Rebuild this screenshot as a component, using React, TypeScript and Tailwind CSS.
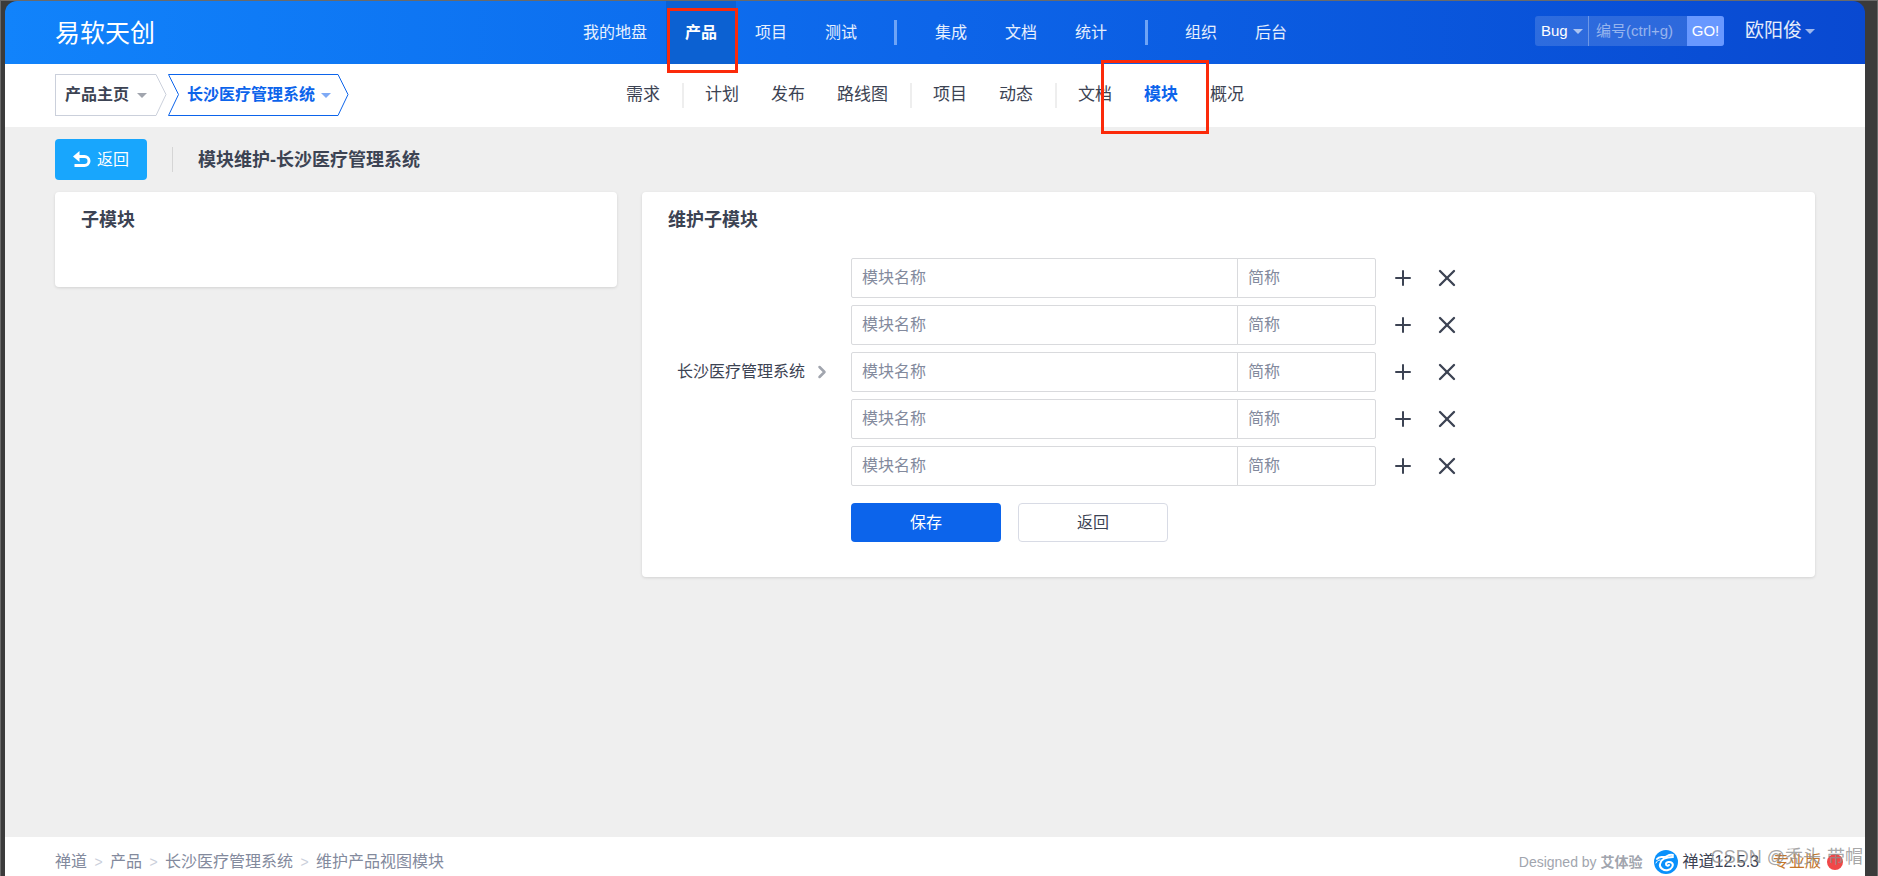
import React from 'react';
import { ChevronRight, Plus, X } from 'lucide-react';

const MAIN_NAV = ['我的地盘', '产品', '项目', '测试', '|', '集成', '文档', '统计', '|', '组织', '后台'];

const SUB_NAV = ['需求', '|', '计划', '发布', '路线图', '|', '项目', '动态', '|', '文档', '模块', '概况'];

const BREADCRUMBS = ['禅道', '产品', '长沙医疗管理系统', '维护产品视图模块'];

const ROWS = [1, 2, 3, 4, 5];

const Caret = ({ className }: { className: string }) => (
  <svg viewBox="0 0 10 5" className={`h-[5px] w-[10px] shrink-0 ${className}`} aria-hidden="true">
    <path d="M0 0h10L5 5z" fill="currentColor" />
  </svg>
);

const ReplyIcon = () => (
  <svg viewBox="0 0 18 17" className="h-[17px] w-[18px]" aria-hidden="true">
    <path d="M0 5.500 6.500 0v11z" fill="currentColor" />
    <path d="M5 5.500h6.500a4.500 4.500 0 0 1 0 9H1.500" fill="none" stroke="currentColor" strokeWidth="3" />
  </svg>
);

const ZentaoLogo = () => (
  <svg viewBox="0 0 24 24" className="h-6 w-6 shrink-0" aria-hidden="true">
    <circle cx="12" cy="12" r="12" fill="#0a91fb" />
    <g fill="none" stroke="#fff" strokeLinecap="round">
      <path d="M3 9c2-3 4-2 7-2 3 0 4-3 9-2" strokeWidth="2" />
      <path d="M19 7c-5 0-12 1-13 7-1 4 4 7 8 6 4-1 6-5 4-7-2-2-6-1-6 1 0 2 2 2 3 1" strokeWidth="2" />
      <path d="M2 13c1-2 2-3 4-3" strokeWidth="1" />
    </g>
  </svg>
);

const App: React.FC = () => {
  return (
    <div className="relative min-h-screen bg-[#3b3b3b] border-t border-x border-[#6a6a6a] pl-1 pr-3 flex flex-col overflow-hidden font-['Liberation_Sans','Noto_Sans_CJK_SC',sans-serif] text-[16px] leading-6 text-[#3c4353]">
      {/* Header */}
      <header className="h-[63px] shrink-0 rounded-t-xl bg-gradient-to-r from-[#1183fb] via-[#0d65e9] to-[#0949d1] px-[50px] grid grid-cols-[1fr_auto_1fr] items-center text-white">
        <h1 className="text-[25px] leading-8">易软天创</h1>
        <nav className="flex h-full items-center">
          {MAIN_NAV.map((item, index) =>
            item === '|' ? (
              <span key={index} className="flex w-10 justify-center">
                <span className="h-[25px] w-[3px] bg-[#6ea4f6]" />
              </span>
            ) : (
              <a
                key={index}
                href="#"
                className={`relative flex h-full items-center px-[19px] ${
                  item === '产品' ? 'bg-[#0c61d2] font-bold' : 'text-white/90'
                }`}
              >
                {item}
                {item === '产品' && (
                  <span className="absolute left-px top-[7px] z-10 h-[65px] w-[71px] border-[3px] border-[#fb2a0a]" />
                )}
              </a>
            )
          )}
        </nav>
        <div className="flex items-center justify-end pb-[3px]">
          <form className="flex h-[30px] rounded-[3px] bg-white/15 text-[15px]">
            <label className="relative flex w-[54px] items-center border-r border-white/30">
              <select aria-label="Bug" className="h-full w-full appearance-none bg-transparent pl-[6px]">
                <option>Bug</option>
              </select>
              <Caret className="pointer-events-none absolute right-[5px] text-white/60" />
            </label>
            <input
              aria-label="编号"
              placeholder="编号(ctrl+g)"
              className="w-[98px] bg-transparent pl-[7px] placeholder:text-white/50"
            />
            <button type="button" className="w-[37px] rounded-r-[3px] bg-[#6898ff]">
              GO!
            </button>
          </form>
          <button type="button" className="ml-[21px] flex items-center gap-[3px] text-[19px] text-white/90">
            欧阳俊
            <Caret className="text-white/60" />
          </button>
        </div>
      </header>

      {/* Sub header */}
      <div className="h-[63px] shrink-0 bg-white px-[50px] pb-px grid grid-cols-[1fr_auto_1fr] items-center">
        <div className="flex items-center gap-px font-bold">
          <button type="button" className="flex h-[42px]">
            <span className="flex h-full w-[101px] items-center gap-2 border-y border-l border-[#cbd0db] pl-[9px]">
              产品主页
              <Caret className="text-[#a1a5ae]" />
            </span>
            <svg viewBox="0 0 11 42" className="h-[42px] w-[11px]" aria-hidden="true">
              <path d="M0 0.500 10 20.500 0 41.500" fill="none" stroke="#cbd0db" />
            </svg>
          </button>
          <button type="button" className="flex h-[42px] text-[#0c64eb]">
            <svg viewBox="0 0 11 42" className="h-[42px] w-[11px]" aria-hidden="true">
              <path d="M11 0.500H0.500L10.500 20.500 0.500 41.500H11" fill="none" stroke="currentColor" />
            </svg>
            <span className="flex h-full w-[159px] items-center gap-[6px] border-y border-[#0c64eb] pl-2">
              长沙医疗管理系统
              <Caret className="text-[#7faaf5]" />
            </span>
            <svg viewBox="0 0 11 42" className="h-[42px] w-[11px]" aria-hidden="true">
              <path d="M0 0.500 10 20.500 0 41.500" fill="none" stroke="currentColor" />
            </svg>
          </button>
        </div>
        <nav className="flex h-full items-center text-[17px]">
          {SUB_NAV.map((item, index) =>
            item === '|' ? (
              <span key={index} className="flex w-[13px] justify-center">
                <span className="h-[25px] w-[2px] bg-[#eeeeee]" />
              </span>
            ) : (
              <a
                key={index}
                href="#"
                className={`relative flex h-full items-center px-4 ${item === '模块' ? 'font-bold text-[#0c64eb]' : ''}`}
              >
                {item}
                {item === '模块' && (
                  <span className="absolute -left-[27px] -top-1 z-10 h-[74px] w-[108px] border-[3px] border-[#fb2a0a]" />
                )}
              </a>
            )
          )}
        </nav>
      </div>

      {/* Content */}
      <main className="flex-1 bg-[#efefef] px-[50px] pt-3">
        <div className="flex items-center">
          <button
            type="button"
            className="flex h-[41px] w-[92px] items-center justify-center gap-[6px] rounded bg-[#18a6fd] text-white"
          >
            <ReplyIcon />
            返回
          </button>
          <span className="mx-[25px] h-[25px] w-px bg-[#d5d5d5]" />
          <h2 className="text-[18px] font-bold">模块维护-长沙医疗管理系统</h2>
        </div>

        <div className="mt-3 grid grid-cols-[562fr_1173fr] items-start gap-[25px]">
          <section className="h-[95px] rounded bg-white px-[26px] pt-4 shadow-[0_1px_3px_rgba(0,0,0,0.12)]">
            <h3 className="text-[18px] font-bold">子模块</h3>
          </section>

          <section className="rounded bg-white px-[26px] pb-[35px] pt-4 shadow-[0_1px_3px_rgba(0,0,0,0.12)]">
            <h3 className="text-[18px] font-bold">维护子模块</h3>
            <form className="mt-[26px] grid grid-cols-[183px_1fr] gap-y-[17px]">
              <div className="flex items-center gap-[7px] pl-[9px]">
                长沙医疗管理系统
                <ChevronRight strokeWidth={3} className="h-5 w-5 text-[#a1a5ae]" />
              </div>
              <div className="flex flex-col gap-[7px]">
                {ROWS.map((row) => (
                  <div key={row} className="flex items-center">
                    <input
                      aria-label={`模块名称 ${row}`}
                      placeholder="模块名称"
                      className="h-10 w-[387px] rounded-l-[2px] border border-[#d9dadd] px-[10px] placeholder:text-[#838a9d]"
                    />
                    <input
                      aria-label={`简称 ${row}`}
                      placeholder="简称"
                      className="-ml-px h-10 w-[139px] rounded-r-[2px] border border-[#d9dadd] px-[10px] placeholder:text-[#838a9d]"
                    />
                    <button type="button" aria-label="添加" className="ml-4 flex h-6 w-[22px] items-center justify-center">
                      <Plus strokeWidth={2} className="h-[24px] w-[24px] shrink-0" />
                    </button>
                    <button type="button" aria-label="删除" className="ml-[22px] flex h-6 w-[22px] items-center justify-center">
                      <X strokeWidth={2} className="h-[28px] w-[28px] shrink-0" />
                    </button>
                  </div>
                ))}
              </div>
              <div className="col-start-2 flex gap-[17px]">
                <button type="button" className="h-[39px] w-[150px] rounded bg-[#0c64eb] text-white">
                  保存
                </button>
                <button type="button" className="h-[39px] w-[150px] rounded border border-[#d8dbe5] bg-white">
                  返回
                </button>
              </div>
            </form>
          </section>
        </div>
      </main>

      {/* Footer */}
      <footer className="relative flex h-[39px] shrink-0 items-start justify-between bg-white pl-[50px] pr-[22px] pt-[13px] text-[#838a9d]">
        <nav className="flex">
          {BREADCRUMBS.map((item, index) => (
            <React.Fragment key={item}>
              {index > 0 && <span className="w-[23px] text-center text-[14px] text-[#cbd0db]">&gt;</span>}
              <a href="#">{item}</a>
            </React.Fragment>
          ))}
        </nav>
        <div className="flex items-center">
          <span className="text-[14px] text-[#a1a5ae]">
            Designed by <b>艾体验</b>
          </span>
          <span className="ml-3 flex items-center gap-1 text-[#3c4353]">
            <ZentaoLogo />
            禅道12.5.3
          </span>
          <span className="ml-[14px] text-[#c4762b]">专业版</span>
          <span className="ml-[6px] h-4 w-4 rounded-full bg-[#f04848]" />
        </div>
        <span className="absolute right-[2px] top-1 text-[18px] leading-8 text-[#8f8f8f]/80">CSDN @秃头·带帽</span>
      </footer>
    </div>
  );
};

export default App;
